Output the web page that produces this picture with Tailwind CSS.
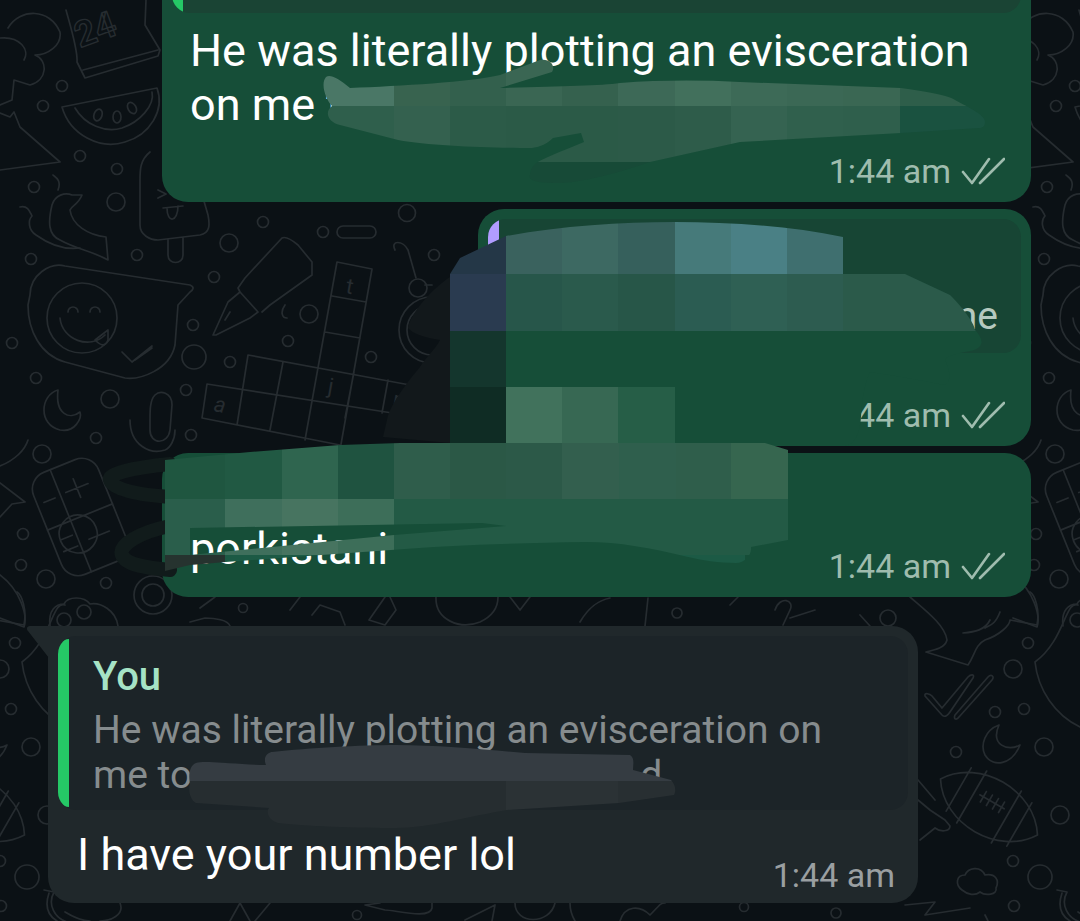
<!DOCTYPE html>
<html lang="en">
<head>
<meta charset="UTF-8">
<title>Chat</title>
<script src="https://cdn.jsdelivr.net/npm/@tailwindcss/browser@4"></script>
</head>
<body class="relative w-[1080px] h-[921px] overflow-hidden bg-[#0b1115] font-['Roboto',sans-serif]">

<!-- wallpaper doodles -->
<svg class="absolute top-0 left-0" width="1080" height="921" viewBox="0 0 1080 921" fill="none" stroke="#262c30" stroke-width="1.7" stroke-linecap="round" stroke-linejoin="round">
  <g id="doodles">
    <path d="M8 28C20 8 50 8 60 32C62 45 48 55 35 55C48 60 48 80 30 85L14 80L12 100L0 105M0 38C20 36 30 50 24 60"/>
    <path d="M0 113L10 117L14 112L20 127L60 162L0 170"/>
    <path d="M66 10C70 25 78 50 77 62L85 78L158 56L160 50L145 25L146 0M83 70L158 50"/>
    <text x="80" y="48" transform="rotate(-20 80 48)" font-family="Roboto" font-size="36" font-weight="700" stroke-width="1.4">24</text>
    <path d="M62 107C70 135 100 150 125 142C150 135 165 110 157 88ZM75 108C85 125 105 133 122 128C140 122 155 105 152 92"/>
    <ellipse cx="98" cy="115" rx="4" ry="6" transform="rotate(20 98 115)"/>
    <ellipse cx="117" cy="117" rx="4" ry="6"/>
    <ellipse cx="132" cy="108" rx="4" ry="6" transform="rotate(-30 132 108)"/>
    <path d="M58 190C62 180 55 177 53 175M52 205C55 195 65 192 72 195L82 195C78 205 72 205 70 210C72 225 88 235 106 237L108 260C90 250 78 250 60 240C48 235 48 222 52 205Z"/>
    <path d="M20 207C28 205 30 212 32 216C28 220 28 230 36 235C50 245 65 250 80 248"/>
    <path d="M150 152C140 160 140 170 140 180L140 225C140 235 150 240 158 240L200 235C210 233 210 225 208 215L195 170M168 240L168 255C168 265 183 265 183 255L183 238M158 190L166 194L158 198M163 208L183 206M167 208C167 224 178 222 178 206"/>
    <path d="M65 266L190 285C195 287 193 290 190 292L178 305L175 345C170 370 140 380 125 378L65 362C40 355 28 330 28 305L30 295C30 275 50 262 65 266Z"/>
    <circle cx="82" cy="318" r="35"/>
    <path d="M60 318C62 340 90 350 105 335M68 312a5 5 0 0 1 10 0M90 312a5 5 0 0 1 10 0M95 340L108 330L108 340C105 348 100 345 95 340ZM122 352L132 362L152 346M135 360L152 348"/>
    <path d="M213 335L228 302L240 292L258 312L250 318L216 335ZM240 292L238 288L245 278L282 238C286 236 292 240 298 245L312 262L312 275L270 305L262 312M225 320L230 312M285 305C280 312 282 318 287 318"/>
    <path d="M337 262L372 269L340 450M337 262L305 440M332 296L366 302M325 332L360 338M248 355L410 385M207 384L405 415M202 418L340 445M248 355L237 425M283 362L270 430M354 372L345 418M388 380L382 413M207 384L202 418"/>
    <g fill="#262c30" stroke="none" font-family="Roboto" font-size="22">
      <text x="345" y="293" transform="rotate(10 345 293)">t</text>
      <text x="327" y="393" transform="rotate(10 327 393)">j</text>
      <text x="213" y="411" transform="rotate(10 213 411)" font-style="italic">a</text>
      <text x="392" y="406" transform="rotate(10 392 406)">m</text>
    </g>
    <path d="M155 395C150 400 150 410 150 420L150 430C150 445 168 445 170 430L172 405C172 392 160 390 155 395ZM130 420C130 445 150 455 165 450C170 448 175 440 175 430"/>
    <path d="M58 390C40 395 38 425 60 430C75 433 82 418 80 412C70 420 55 415 58 390Z"/>
    <path d="M395 250C390 240 403 240 408 250L416 278M425 285L432 285"/>
    <circle cx="418" cy="288" r="9"/>
    <circle cx="432" cy="330" r="33"/>
    <circle cx="432" cy="330" r="25"/>
    <path d="M0 483L25 502L12 504L0 517M0 575C20 590 28 615 24 627L0 618M0 466C15 460 25 450 28 440"/>
    <g transform="translate(80 517) rotate(-22)">
      <rect x="-35" y="-55" width="70" height="110" rx="18"/>
      <path d="M-10 -55L-10 55M-35 0L35 0M-28 -27L-16 -27M-4 -28L20 -28M8 -38L8 -18M0 24L22 24M-27 15a19 19 0 1 1 0 .1M-26 14L-14 14M-28 26L-13 26"/>
    </g>
    <path d="M50 626C48 610 56 604 64 604C68 596 84 596 90 604C100 602 116 610 118 626"/>
    <circle cx="64" cy="620" r="7"/>
    <circle cx="84" cy="612" r="7"/>
    <path d="M925 696L942 715C945 718 948 715 950 712L973 678C975 674 971 674 968 677L942 708L932 696C930 694 924 692 925 696ZM955 715C953 720 957 720 959 717L992 680C995 676 991 674 988 677Z"/>
    <path d="M999 725C985 730 980 745 985 755C993 768 1012 765 1020 745C1008 752 990 745 999 725Z"/>
    <g transform="translate(989 807) rotate(30)">
      <path d="M-56 0C-32 -38 32 -38 56 0C32 38 -32 38 -56 0ZM-35 -25L-35 25M-20 -30L-20 30M35 -25L35 25M20 -30L20 30M-14 -6L14 -6M-10 -12L-10 0M-3 -12L-3 0M4 -12L4 0M11 -12L11 0"/>
    </g>
    <path d="M962 890C955 885 956 875 965 875C968 868 980 865 985 875C995 873 1000 880 996 888C998 895 985 896 980 892C975 896 968 895 962 890Z"/>
    <path d="M910 597C925 610 945 625 947 640C945 648 935 650 926 652L968 665C975 655 975 645 985 640C1000 635 1010 625 1010 620L1037 625C1040 610 1035 595 1030 592M990 620C985 630 975 632 963 633M1000 612C995 625 990 625 985 628"/>
    <path d="M1078 605C1065 600 1065 640 1035 662C1038 690 1055 715 1080 727"/>
    <path d="M918 800L930 810L945 820L950 826C950 832 940 832 935 828L920 840M918 780L935 800"/>
    <path d="M905 905L935 902L925 915L970 908M985 915L988 921"/>
    <path d="M1057 890L1067 892C1060 905 1068 918 1080 922M1062 893C1058 905 1060 915 1070 921"/>
    <path d="M436 597C435 620 460 630 480 622C495 615 498 605 498 597M369 620L385 597M390 597L396 610L385 625L369 620M290 610L300 597M312 615L320 605L340 612L345 625M200 608L215 597M190 622L205 618C215 618 228 620 230 626M775 610C780 595 795 600 790 610L783 625M790 618L815 610M580 622C590 605 600 600 610 598M648 598L645 626M510 597L520 610L530 597M730 605L738 597M860 615L870 626"/>
    <circle cx="243" cy="608" r="4.5"/>
    <circle cx="677" cy="613" r="5"/>
    <circle cx="888" cy="618" r="8"/>
    <path d="M465 920L495 905L492 921M515 903C515 925 550 925 555 903M570 903C570 912 572 916 575 921M620 921C625 905 640 905 650 915C660 905 660 903 665 903M380 903L365 905L385 910C395 910 430 920 432 908L432 903M270 903L255 921M230 921L240 903L250 921M120 903C125 915 110 921 100 921M65 912C75 918 85 921 90 921"/>
    <circle cx="357" cy="915" r="4.5"/>
    <circle cx="744" cy="907" r="4.5"/>
    <circle cx="836" cy="913" r="5"/>
    <circle cx="62" cy="86" r="5.5"/><circle cx="43" cy="106" r="5.5"/><circle cx="80" cy="156" r="5.5"/>
    <circle cx="117" cy="169" r="5.5"/><circle cx="34" cy="187" r="5.5"/><circle cx="116" cy="202" r="9"/>
    <circle cx="263" cy="222" r="5.5"/><circle cx="323" cy="232" r="5.5"/><circle cx="407" cy="213" r="8.5"/>
    <rect x="337" y="226" width="39" height="12" rx="6"/>
    <circle cx="229" cy="243" r="9"/><circle cx="137" cy="255" r="5.5"/><circle cx="31" cy="259" r="5.5"/>
    <circle cx="214" cy="277" r="5.5"/><circle cx="309" cy="314" r="9"/><circle cx="193" cy="325" r="5.5"/>
    <circle cx="12" cy="343" r="5.5"/><circle cx="288" cy="341" r="5.5"/><circle cx="194" cy="357" r="12"/>
    <circle cx="230" cy="362" r="5.5"/><circle cx="371" cy="357" r="5.5"/><circle cx="36" cy="378" r="5.5"/>
    <circle cx="186" cy="390" r="5.5"/><circle cx="110" cy="399" r="9"/><circle cx="96" cy="438" r="5.5"/>
    <circle cx="191" cy="435" r="5.5"/><circle cx="434" cy="255" r="5.5"/><circle cx="42" cy="454" r="9"/>
    <circle cx="23" cy="534" r="5.5"/><circle cx="21" cy="565" r="5.5"/><circle cx="46" cy="579" r="9"/>
    <circle cx="106" cy="583" r="5.5"/><circle cx="153" cy="595" r="19"/><circle cx="153" cy="595" r="11"/>
    <circle cx="1028" cy="643" r="5.5"/><circle cx="1013" cy="669" r="9"/><circle cx="995" cy="712" r="5.5"/>
    <circle cx="1024" cy="709" r="5.5"/><circle cx="1044" cy="747" r="9"/><circle cx="956" cy="752" r="5.5"/>
    <circle cx="1060" cy="815" r="9"/><circle cx="1013" cy="861" r="5.5"/><circle cx="1040" cy="877" r="12"/>
    <circle cx="1014" cy="906" r="5.5"/>
  </g>
  <use href="#doodles" x="1013"/>
  <use href="#doodles" x="-1013"/>
</svg>

<!-- messages -->
<main class="relative flex flex-col items-start gap-[7px] -mt-[60px] text-white">

  <!-- outgoing 1 -->
  <div class="ml-[162px] w-[869px] h-[262px] flex flex-col p-[10px] pb-0 rounded-[26px] bg-[#164e38]">
    <div class="h-[63px] flex overflow-hidden rounded-[18px] bg-[#1a4434]">
      <div class="w-[11px] bg-[#25c866]"></div>
    </div>
    <p class="mt-[11px] ml-[18px] text-[45px] leading-[54px]">He was literally plotting an evisceration<br>on me t</p>
    <div class="mt-auto flex items-center justify-end gap-[10px] pr-[16px] pb-[11px] text-[#9fbcae]">
      <span class="text-[34px] leading-[40px]">1:44 am</span>
      <svg width="44" height="28" viewBox="0 0 44 28" fill="none" stroke="currentColor" stroke-width="2.6" stroke-linecap="round" stroke-linejoin="round"><path d="M2 15L11 26L28 2M19 26L43 2"/></svg>
    </div>
  </div>

  <!-- outgoing 2 -->
  <div class="ml-[478px] w-[553px] h-[237px] flex flex-col p-[10px] pb-0 rounded-[26px] bg-[#164e38]">
    <div class="h-[134px] flex overflow-hidden rounded-[18px] bg-[#174534]">
      <div class="w-[11px] bg-[#b09cff]"></div>
      <p class="ml-auto pt-[75px] pr-[23px] text-[39px] leading-[45px] text-[#b5c9bf]">ne</p>
    </div>
    <div class="mt-auto flex items-center justify-end gap-[10px] pr-[16px] pb-[11px] text-[#9fbcae]">
      <span class="text-[34px] leading-[40px]">1:44 am</span>
      <svg width="44" height="28" viewBox="0 0 44 28" fill="none" stroke="currentColor" stroke-width="2.6" stroke-linecap="round" stroke-linejoin="round"><path d="M2 15L11 26L28 2M19 26L43 2"/></svg>
    </div>
  </div>

  <!-- outgoing 3 -->
  <div class="ml-[162px] w-[869px] h-[144px] flex items-end justify-between pl-[28px] pr-[26px] rounded-[26px] bg-[#164e38]">
    <p class="mb-[21px] text-[45px] leading-[54px]">porkistani</p>
    <div class="flex items-center gap-[10px] pb-[11px] text-[#9fbcae]">
      <span class="text-[34px] leading-[40px]">1:44 am</span>
      <svg width="44" height="28" viewBox="0 0 44 28" fill="none" stroke="currentColor" stroke-width="2.6" stroke-linecap="round" stroke-linejoin="round"><path d="M2 15L11 26L28 2M19 26L43 2"/></svg>
    </div>
  </div>

  <!-- incoming reply -->
  <div class="relative ml-[48px] mt-[22px] w-[870px] h-[277px] flex flex-col p-[10px] pb-0 rounded-[26px] rounded-tl-none bg-[#20282b]">
    <svg class="absolute -left-[21px] top-0" width="22" height="32" viewBox="0 0 22 32"><path d="M22 0L3 0C0 0 -1 3 1 5L22 32Z" fill="#20282b"/></svg>
    <div class="h-[174px] flex overflow-hidden rounded-[18px] bg-[#1c2428]">
      <div class="w-[11px] my-[3px] rounded-l-[18px] bg-[#25c866]"></div>
      <div class="pl-[24px] pt-[18px]">
        <p class="text-[40px] leading-[45px] font-medium text-[#a6e3c5]">You</p>
        <p class="mt-[9px] text-[39px] leading-[45px] text-[#868c8e]">He was literally plotting an evisceration on<br>me to<span class="inline-block w-[448px]"></span>d</p>
      </div>
    </div>
    <div class="flex-1 flex items-end justify-between pl-[19px] pr-[13px]">
      <p class="mb-[21px] text-[45px] leading-[54px]">I have your number lol</p>
      <span class="pb-[8px] text-[34px] leading-[40px] text-[#9a9fa1]">1:44 am</span>
    </div>
  </div>
</main>

<!-- scribbled and pixelated redactions -->
<svg class="absolute top-0 left-0" width="1080" height="921" viewBox="0 0 1080 921">
  <defs>
    <clipPath id="smear1"><path d="M326 77C330 74 338 78 350 88C400 86 470 82 500 75L540 60C550 58 556 66 552 72L500 88C560 86 600 86 620 83C660 80 700 80 740 82L901 88C930 92 950 96 955 100C970 108 985 115 985 122C985 128 980 128 979 128L901 133L740 142L650 162C620 172 580 184 554 183C535 183 528 180 530 175C530 170 533 166 536 163C550 155 570 148 584 142L581 133L553 138C545 146 535 148 530 148C490 148 430 146 398 140L340 125C328 122 324 112 332 106C326 100 320 84 326 77Z"/></clipPath>
    <clipPath id="smear2"><path d="M450 274L460 258L506 236C560 226 620 222 675 222C730 222 790 226 843 237L843 274L905 274L950 295C965 310 975 325 975 330C985 340 985 350 965 352C950 355 945 358 945 360C950 370 952 382 944 385C920 380 890 375 870 372C860 395 862 420 860 425C858 440 850 446 845 446L450 446Z"/></clipPath>
    <clipPath id="smear3"><path clip-rule="evenodd" d="M165 460L250 452L340 445L400 443L765 443L788 450L788 540L751 547C752 555 745 563 736 563C720 563 700 560 688 557C650 548 620 542 585 542C520 543 450 545 391 550C320 555 250 560 190 565L165 571ZM190 528L482 523L506 526L394 535L190 555Z"/></clipPath>
    <clipPath id="smear4"><path d="M196 763C205 760 240 765 266 765C262 755 270 752 272 752C310 748 360 745 396 745C440 745 490 750 525 753L630 755C635 758 633 765 633 770L671 780C676 785 676 792 674 795L619 803L507 810C470 816 430 828 396 828C360 828 300 826 278 823C268 820 266 812 269 808L196 803C190 800 188 790 190 783C188 775 190 765 196 763Z"/></clipPath>
  </defs>

  <path d="M450 277C430 290 410 315 408 328C415 336 430 338 440 340C435 350 425 358 420 367C405 385 390 405 387 420L383 437L450 443Z" fill="#12181b"/>
  <path d="M170 464C130 468 108 474 110 480C112 490 140 495 170 497M170 526C140 532 118 545 122 555C126 566 150 568 170 570" fill="none" stroke="#111b1b" stroke-width="14" stroke-linecap="round"/>

  <g clip-path="url(#smear1)">
    <rect x="320" y="50" width="74" height="56" fill="#4a7766"/><rect x="394" y="50" width="56" height="56" fill="#38634f"/>
    <rect x="450" y="50" width="56" height="56" fill="#33604d"/><rect x="506" y="50" width="56" height="56" fill="#3a6653"/>
    <rect x="562" y="50" width="56" height="56" fill="#35614e"/><rect x="618" y="50" width="57" height="56" fill="#3d6957"/>
    <rect x="675" y="50" width="56" height="56" fill="#42705c"/><rect x="731" y="50" width="56" height="56" fill="#3d6a57"/>
    <rect x="787" y="50" width="56" height="56" fill="#3b6855"/><rect x="843" y="50" width="57" height="56" fill="#3a6753"/>
    <rect x="900" y="50" width="90" height="56" fill="#2e5e4a"/>
    <rect x="320" y="106" width="74" height="56" fill="#2f5f4c"/><rect x="394" y="106" width="56" height="56" fill="#34614f"/>
    <rect x="450" y="106" width="56" height="56" fill="#2c5b48"/><rect x="506" y="106" width="112" height="56" fill="#2b5a47"/>
    <rect x="618" y="106" width="57" height="56" fill="#2c5a48"/><rect x="675" y="106" width="56" height="56" fill="#2e5c4a"/>
    <rect x="731" y="106" width="56" height="56" fill="#356351"/><rect x="787" y="106" width="56" height="56" fill="#30604d"/>
    <rect x="843" y="106" width="57" height="56" fill="#2f5f4c"/><rect x="900" y="106" width="90" height="56" fill="#1a5240"/>
    <rect x="320" y="162" width="670" height="30" fill="#174a37"/>
  </g>

  <g clip-path="url(#smear2)">
    <rect x="450" y="218" width="56" height="56" fill="#243747"/><rect x="506" y="218" width="56" height="56" fill="#3a625e"/>
    <rect x="562" y="218" width="56" height="56" fill="#3d6962"/><rect x="618" y="218" width="57" height="56" fill="#36605c"/>
    <rect x="675" y="218" width="56" height="56" fill="#467a7a"/><rect x="731" y="218" width="56" height="56" fill="#4a8085"/>
    <rect x="787" y="218" width="56" height="56" fill="#3f6f6f"/>
    <rect x="450" y="274" width="56" height="57" fill="#2a3b50"/><rect x="506" y="274" width="56" height="57" fill="#27564a"/>
    <rect x="562" y="274" width="56" height="57" fill="#2a5a4c"/><rect x="618" y="274" width="57" height="57" fill="#275648"/>
    <rect x="675" y="274" width="56" height="57" fill="#2b5c52"/><rect x="731" y="274" width="56" height="57" fill="#2f6054"/>
    <rect x="787" y="274" width="56" height="57" fill="#2d5c50"/><rect x="843" y="274" width="140" height="57" fill="#2b5a4a"/>
    <rect x="450" y="331" width="56" height="56" fill="#14362d"/><rect x="506" y="331" width="480" height="56" fill="#164e38"/>
    <rect x="450" y="387" width="56" height="59" fill="#0f2c24"/><rect x="506" y="387" width="56" height="59" fill="#41725c"/>
    <rect x="562" y="387" width="56" height="59" fill="#376853"/><rect x="618" y="387" width="57" height="59" fill="#265e47"/>
    <rect x="675" y="387" width="190" height="59" fill="#164e38"/>
  </g>

  <g clip-path="url(#smear3)">
    <rect x="160" y="443" width="65" height="56" fill="#1f5640"/><rect x="225" y="443" width="57" height="56" fill="#215943"/>
    <rect x="282" y="443" width="56" height="56" fill="#2f654f"/><rect x="338" y="443" width="56" height="56" fill="#1f5340"/>
    <rect x="394" y="443" width="56" height="56" fill="#2f5d4b"/><rect x="450" y="443" width="56" height="56" fill="#2b5846"/>
    <rect x="506" y="443" width="56" height="56" fill="#2c5948"/><rect x="562" y="443" width="57" height="56" fill="#335f4e"/>
    <rect x="619" y="443" width="57" height="56" fill="#2f5f4d"/><rect x="676" y="443" width="55" height="56" fill="#2f5e4b"/>
    <rect x="731" y="443" width="57" height="56" fill="#36664f"/>
    <rect x="160" y="499" width="65" height="56" fill="#2a5e4b"/><rect x="225" y="499" width="57" height="56" fill="#3f6f5c"/>
    <rect x="282" y="499" width="56" height="56" fill="#477460"/><rect x="338" y="499" width="56" height="56" fill="#3d6e59"/>
    <rect x="394" y="499" width="394" height="56" fill="#235a45"/>
    <rect x="160" y="555" width="65" height="20" fill="#26332f"/><rect x="225" y="555" width="520" height="20" fill="#1c5a45"/>
  </g>

  <g clip-path="url(#smear4)">
    <rect x="185" y="740" width="500" height="41" fill="#353c42"/>
    <rect x="185" y="781" width="321" height="50" fill="#262d30"/>
    <rect x="506" y="781" width="112" height="50" fill="#2b3235"/>
    <rect x="618" y="781" width="60" height="50" fill="#282f32"/>
  </g>
</svg>

</body>
</html>
